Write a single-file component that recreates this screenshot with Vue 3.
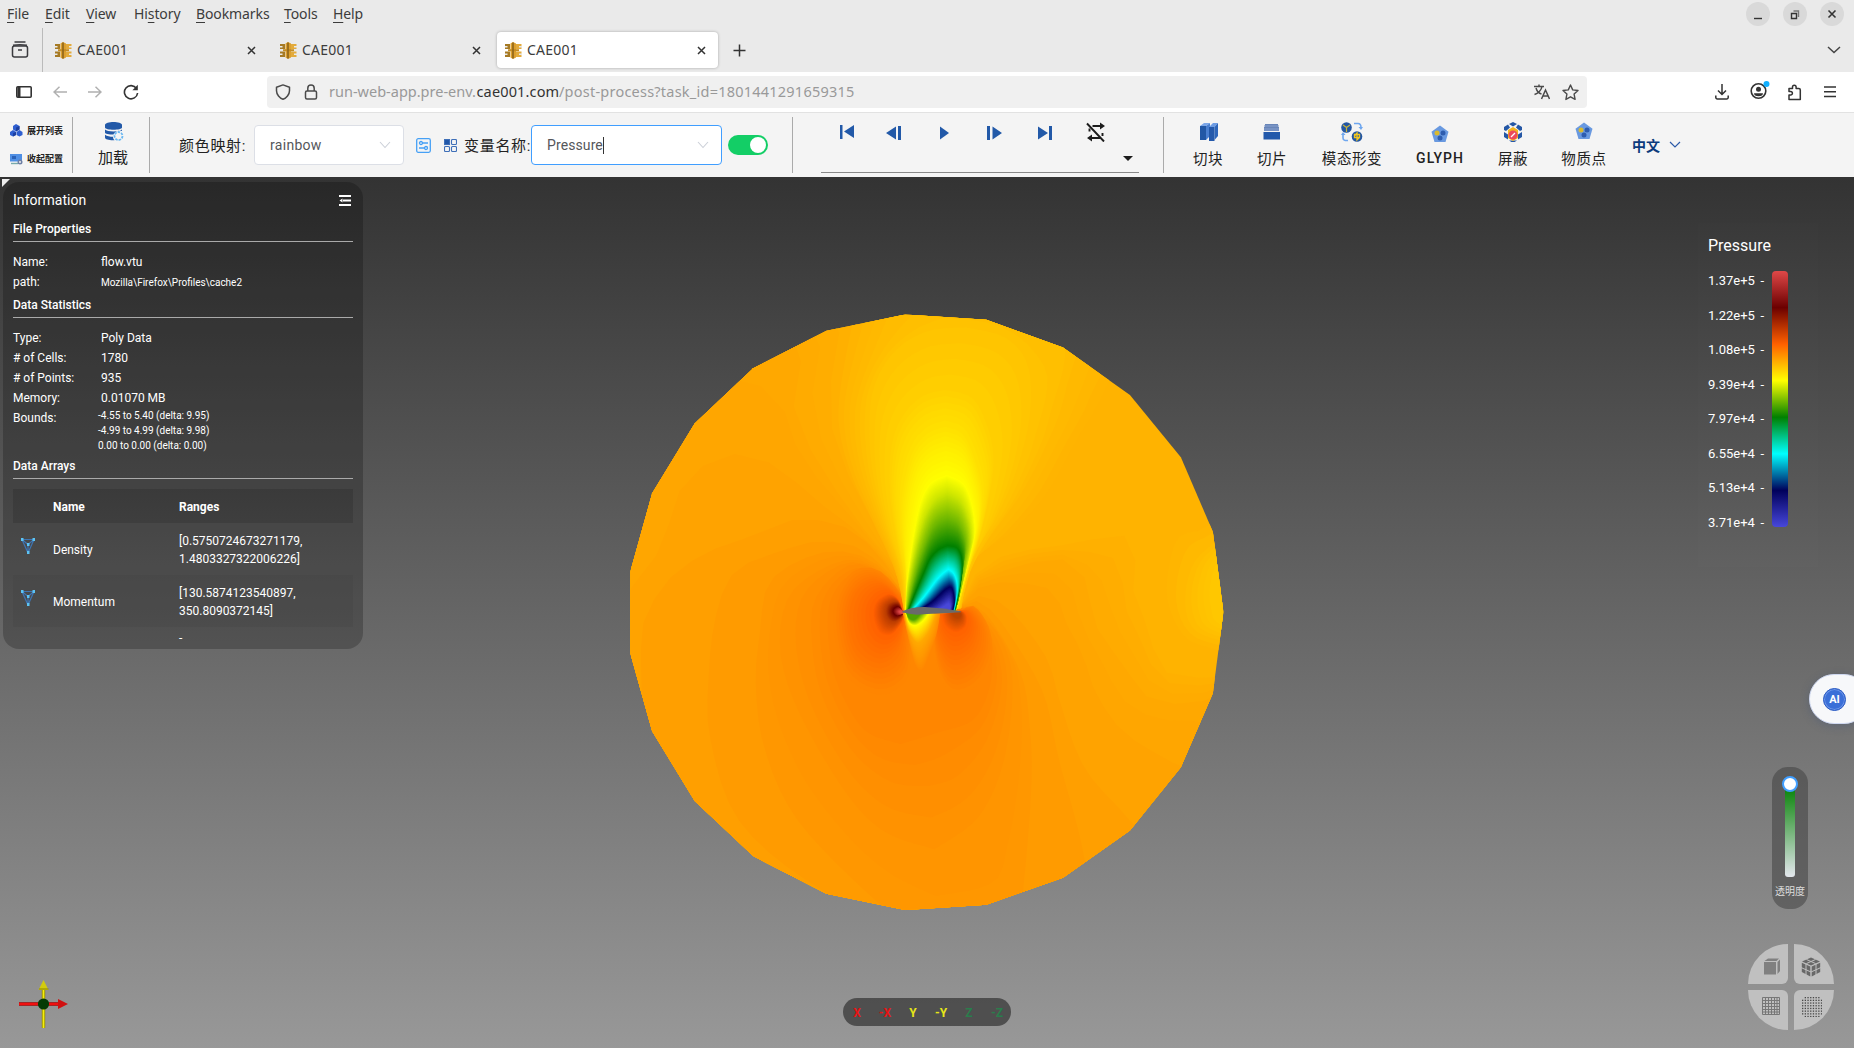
<script setup>
const menus = [
  { k: 'F', t: 'ile', x: 38 }, { k: 'E', t: 'dit', x: 41 }, { k: 'V', t: 'iew', x: 48 },
  { p: 'Hi', k: 's', t: 'tory', x: 62 }, { k: 'B', t: 'ookmarks', x: 88 },
  { k: 'T', t: 'ools', x: 49 }, { k: 'H', t: 'elp', x: 40 }
]
const tabs = [false, false, true]
const stats = [
  ['Type:', 'Poly Data'], ['# of Cells:', '1780'], ['# of Points:', '935'], ['Memory:', '0.01070 MB']
]
const arrays = [
  ['Density', '[0.5750724673271179,', '1.4803327322006226]'],
  ['Momentum', '[130.5874123540897,', '350.8090372145]']
]
const ticks = ['1.37e+5', '1.22e+5', '1.08e+5', '9.39e+4', '7.97e+4', '6.55e+4', '5.13e+4', '3.71e+4']
const axes = [['X', 'r'], ['-X', 'r'], ['Y', 'y'], ['-Y', 'y'], ['Z', 'g'], ['-Z', 'g']]
const dots = Array.from({ length: 64 }, (_, i) => [i % 8, Math.floor(i / 8)])
  .filter(([a, b]) => Math.hypot(a - 3.5, b - 3.5) < 4.6)

// Resample a polyline to n points, evenly spaced along its length
function resample(pts, n) {
  const len = [0]
  for (let i = 1; i < pts.length; i++) {
    len.push(len[i - 1] + Math.hypot(pts[i][0] - pts[i - 1][0], pts[i][1] - pts[i - 1][1]))
  }
  const out = []
  let j = 1
  for (let i = 0; i < n; i++) {
    const d = (len[len.length - 1] * i) / (n - 1)
    while (j < pts.length - 1 && len[j] < d) j++
    const f = (d - len[j - 1]) / (len[j] - len[j - 1] || 1)
    out.push([0, 1].map(c => pts[j - 1][c] + (pts[j][c] - pts[j - 1][c]) * f))
  }
  return out
}
// Catmull-Rom rounding of a polyline
function smooth(p) {
  const out = []
  for (let i = 0; i < p.length - 1; i++) {
    const a = p[Math.max(0, i - 1)], b = p[i], c = p[i + 1], d = p[Math.min(p.length - 1, i + 2)]
    for (let s = 0; s < 6; s++) {
      const t = s / 6
      out.push([0, 1].map(k => 0.5 * (2 * b[k] + (c[k] - a[k]) * t + (2 * a[k] - 5 * b[k] + 4 * c[k] - d[k]) * t * t + (3 * b[k] - a[k] - 3 * c[k] + d[k]) * t * t * t)))
    }
  }
  out.push(p[p.length - 1])
  return out
}
const parse = s => s.trim().split(/\s+/).map(v => v.split(',').map(Number))
const toView = ([x, y]) => [617.8 + 0.792 * x, 318.5 + 0.8167 * y]

// keys: [rgb, segment, segment...]; returns filled contours from the first key to the last
function bands(keys, map) {
  const ks = keys.map(([c, ...segs]) => ({
    c, p: segs.flatMap(s => resample(smooth(map ? parse(s).map(toView) : parse(s)), 34))
  }))
  const out = []
  for (let i = 0; i < ks.length; i++) {
    const a = ks[i], b = ks[i + 1]
    const diff = b ? Math.max(...a.c.map((v, k) => Math.abs(v - b.c[k]))) : 0
    const n = b ? Math.max(1, Math.min(26, Math.round(diff / 3))) : 1
    for (let s = 0; s < n; s++) {
      const f = s / n
      const mix = (u, v) => u + (v - u) * f
      out.push({
        fill: `rgb(${a.c.map((v, k) => Math.round(b ? mix(v, b.c[k]) : v)).join(',')})`,
        d: a.p.map((q, m) => q.map((v, k) => (b ? mix(v, b.p[m][k]) : v).toFixed(1)).join(',')).join(' ')
      })
    }
  }
  return out
}
const o = g => [255, g, 0]
const low = bands([
  [o(176), '862,765 880,710 960,650 1100,625 1250,602 1272,660 1265,730 1310,850 1330,930 1456,955 1600,980 1500,1600 800,1700', '800,1700 -100,1700 -100,300 300,-100 600,20 575,280 600,420 650,540 700,680 722,785'],
  [o(168), '862,768 890,720 950,690 1100,660 1170,740 1165,800 1270,960 1285,990 1370,1015 1450,1005 1560,1000 1450,1600 800,1680', '800,1680 -80,1680 -80,350 300,0 475,120 455,250 490,370 560,490 630,590 705,690 722,785'],
  [o(163), '862,770 900,730 980,715 1085,740 1095,790 1150,900 1165,960 1240,1080 1380,1170 1450,1220 1300,1600 800,1660', '800,1660 -20,1600 0,900 140,640 190,490 260,420 325,402 415,430 520,520 620,600 705,700 722,785'],
  [o(159), '862,772 900,750 970,780 1060,900 1090,1000 1150,1170 1259,1300 1320,1400 1200,1600 800,1640', '800,1640 400,1600 150,1300 97,890 140,740 240,650 370,600 470,562 600,590 705,710 722,785'],
  [o(155), '862,774 890,760 950,810 1050,980 1090,1150 1150,1390 1150,1560 800,1620', '800,1620 510,1460 330,1300 262,1100 258,950 275,800 320,690 430,640 520,616 620,635 707,720 722,785'],
  [o(151), '862,776 885,770 930,810 1000,940 1020,1060 1025,1210 1005,1470 980,1600 800,1600', '800,1600 660,1500 470,1300 390,1120 370,960 380,840 400,720 480,660 560,640 640,660 708,725 722,785'],
  [o(146), '860,778 885,780 950,850 980,960 960,1150 900,1290 795,1370', '795,1370 680,1330 590,1240 480,1050 430,900 440,770 500,700 610,660 712,730 722,785'],
  [o(140), '858,780 880,785 930,850 955,960 920,1100 850,1190 780,1215', '780,1215 690,1205 600,1130 530,1000 505,880 510,760 580,680 640,680 712,740 722,785'],
  [o(134), '858,780 880,790 920,850 930,950 890,1050 800,1085 715,1112', '715,1112 630,1080 570,980 545,880 545,770 590,700 650,690 713,745 722,785']
])
const lobes = [
  ...bands([
    [o(133), '722,790 715,745 660,685 600,690 560,760 558,850 590,950 665,992 725,960 738,900 728,800'],
    [o(115), '722,790 712,752 660,712 612,735 592,800 610,880 665,915 710,880 724,800'],
    [o(96), '720,790 708,758 684,745 656,765 650,800 664,838 690,845 712,822 721,800'],
    [[185, 60, 0], '719,790 710,768 700,764 684,772 680,792 688,808 700,812 713,804 719,795'],
    [[107, 0, 0], '719,790 711,778 705,776 698,781 696,788 700,795 705,798 713,796 719,793'],
    [[224, 72, 72], '723,789 718,786 713,786 711,788 713,791 718,792 721,791']
  ]),
  ...bands([
    [o(134), '795,795 792,850 800,920 820,970 850,992 900,965 930,900 925,830 890,775 858,785'],
    [o(114), '803,795 803,850 825,898 855,905 888,875 898,825 880,787 858,786'],
    [o(96), '812,795 820,822 843,838 866,828 872,805 866,791 855,786'],
    [[184, 68, 0], '836,793 842,800 850,803 856,800 857,793 852,788']
  ]),
  ...bands([
    [o(138), '720,792 732,850 748,915 765,930 785,885 800,840 808,794'],
    [o(170), '723,792 733,835 755,865 780,840 799,794'],
    [[255, 255, 0], '727,790 735,815 750,822 768,810 782,792'],
    [[80, 165, 0], '728,789 735,804 748,807 764,790']
  ])
]
const high = bands([
  [o(180), '722,785 702,690 650,570 600,460 570,350 570,250 600,80 620,0', '620,0 1260,0 1200,240 1130,370 1060,500 970,600 890,660 858,780'],
  [o(188), '723,785 707,690 660,560 620,440 605,330 620,230 690,50 700,20', '700,20 1120,20 1105,250 1060,380 1000,500 930,600 880,680 858,780'],
  [o(197), '724,785 714,690 680,580 650,460 640,350 650,240 700,150 780,100 870,92', '870,92 960,115 1015,180 1022,300 990,440 940,560 895,640 855,780'],
  [o(209), '725,785 721,700 702,600 688,480 695,370 725,300 770,258 820,245', '820,245 885,265 922,340 935,420 922,520 898,620 873,690 852,780'],
  [o(226), '726,785 727,700 717,600 718,500 742,400 778,352 820,335', '820,335 863,355 895,430 908,500 901,590 882,660 850,780'],
  [[255, 255, 0], '727,782 729,727 737,661 745,604 760,523 784,474 824,453', '824,453 863,474 883,523 891,588 883,633 871,678 855,743 845,784']
])
const plume = bands([
  [[255, 255, 0], '137,568 140,500 150,420 160,350 180,250 210,190 260,165', '260,165 310,190 335,250 345,330 335,385 320,440 300,520 287,570'],
  [[205, 230, 0], '138,569 144,500 157,427 173,355 195,285 225,237 262,217', '262,217 302,240 326,295 334,355 326,408 310,480 287,570'],
  [[115, 186, 0], '141,570 155,505 173,435 192,378 215,325 237,300 262,290', '262,290 293,306 313,347 317,385 311,430 297,530 286,571'],
  [[0, 128, 0], '145,572 165,520 190,460 210,415 235,388 262,376', '262,376 290,382 304,410 306,450 300,500 289,550 284,572'],
  [[0, 255, 255], '160,566 185,538 205,512 230,478 250,458 265,447', '265,447 279,457 289,480 291,510 286,550 281,572'],
  [[0, 0, 96], '190,562 215,545 240,522 255,508 268,500', '268,500 276,504 281,522 283,545 278,572'],
  [[72, 72, 216], '232,568 248,560 259,553 266,549', '266,549 269,553 271,560 269,570']
], true)
const edge = bands([
  [o(181), '1600,450 1440,580 1380,600 1355,660 1348,760 1390,850 1460,880 1600,920'],
  [o(188), '1600,500 1470,610 1410,670 1390,760 1410,830 1480,860 1600,880'],
  [o(199), '1600,560 1480,650 1450,720 1452,780 1475,820 1600,850']
])
const contours = [...low, ...edge, ...lobes, ...high, ...plume]
const rim = '725,60 918,73 1100,141 1259,257 1380,410 1456,592 1481,789 1456,988 1380,1169 1259,1324 1100,1440 918,1506 725,1519 538,1479 364,1387 225,1252 124,1081 72,890 72,690 124,498 225,327 364,192 538,100'
</script>

<template>
  <div class="window">
    <header class="chrome">
      <div class="menubar">
        <span v-for="m in menus" :key="m.k + m.t" class="menu" :style="{ width: m.x + 'px' }">{{ m.p }}<u>{{ m.k }}</u>{{ m.t }}</span>
        <div class="winbtns">
          <i><svg width="24" height="24"><path d="M8 16.500h8" /></svg></i>
          <i><svg width="24" height="24"><path d="M8.500 11.500h5v5h-5z" /><path d="M10.500 9h5v6" opacity=".6" /></svg></i>
          <i><svg width="24" height="24"><path d="M8.500 8.500l7 7M15.500 8.500l-7 7" stroke-width="1.600" /></svg></i>
        </div>
      </div>
      <div class="tabbar">
        <div class="tabview">
          <svg width="18" height="18" fill="none" stroke="#3b3b3f" stroke-width="1.500"><path d="M3.500 1h11" /><path d="M2 4.200q7-1 14 0" /><rect x="1.500" y="5" width="15" height="11" rx="2" /><path d="M7 9h4" /></svg>
        </div>
        <div v-for="(on, i) in tabs" :key="i" class="tab" :class="{ on }">
          <svg class="fav" width="17" height="17" viewBox="0 0 17 17"><path d="M0 2h5v5H0zM0 9.500h5V15H0z" fill="#a67a24" /><path d="M11 2h5.500v5H11zM11 9.500h5.500V15H11z" fill="#e3ab3c" /><path d="M5.500 1.500L8 0l3 1.500v14L8 17l-2.500-1.500z" fill="#dca030" /><path d="M0 4h2.500v1.500H0zM14 4h3v1.500h-3zM0 11.500h2.500V13H0zM14 11.500h3V13h-3z" fill="#eaeaea" /><path d="M3 7.200h11v2H3z" fill="#c58d24" /><path d="M8 .5v16" stroke="#8e6419" stroke-width="1.600" /></svg>
          <span>CAE001</span>
          <svg class="x" width="9" height="9"><path d="M1 1l7 7M8 1l-7 7" stroke="#333" stroke-width="1.500" /></svg>
        </div>
        <svg class="plus" width="13" height="13"><path d="M6.500 .5v12M.5 6.500h12" stroke="#333" stroke-width="1.500" /></svg>
        <svg class="alltabs" width="14" height="8" fill="none"><path d="M1 1l6 5.500L13 1" stroke="#444" stroke-width="1.500" /></svg>
      </div>
      <div class="navbar">
        <div class="navbtns">
          <svg width="16" height="14" fill="none" stroke="#333" stroke-width="1.600"><rect x=".8" y="1.800" width="14.400" height="10.400" rx="1" /><path d="M3 2v10" stroke-width="3" /></svg>
          <svg width="14" height="12" fill="none" stroke="#b0b0b0" stroke-width="1.500"><path d="M14 6H1M6.500 .7L1 6l5.500 5.300" /></svg>
          <svg width="14" height="12" fill="none" stroke="#b0b0b0" stroke-width="1.500"><path d="M0 6h13M7.500 .7L13 6l-5.500 5.300" /></svg>
          <svg width="16" height="16" fill="none" stroke="#333" stroke-width="1.600"><path d="M13.500 4.500A6.600 6.600 0 1 0 14.600 9" /><path d="M14.800 .8v5.400H9.400z" fill="#333" stroke="none" /></svg>
        </div>
        <div class="url">
          <svg width="16" height="16" fill="none" stroke="#4a4a4a" stroke-width="1.500"><path d="M8 .9L1.500 3.200v3.600c0 3.600 3.200 7.400 6.500 8.400 3.300-1 6.500-4.800 6.500-8.400V3.200z" stroke-linejoin="round" /></svg>
          <svg width="14" height="16" fill="none" stroke="#4a4a4a" stroke-width="1.500"><rect x="1.500" y="7" width="11" height="8" rx="1.500" /><path d="M3.800 7V4.200a3.200 3.200 0 0 1 6.400 0V7" /></svg>
          <p><span class="u1">run-web-app.pre-env.</span><b>cae001.com</b><span class="u3">/post-process?task_id=1801441291659315</span></p>
          <svg class="translate" width="16" height="16" fill="none" stroke="#4a4a4a" stroke-width="1.500"><path d="M0 2.500h10M5 .5v2M8 2.500C7.500 6 4 9.500.5 10.500M2 4c1 3.500 3.500 5.500 5.500 6" /><path d="M7.500 15l4-9 4 9M9 12h5" /></svg>
          <svg width="17" height="17" viewBox="0 0 17 17" fill="none" stroke="#4a4a4a" stroke-width="1.400" stroke-linejoin="round"><path d="M8.500 1l2.200 4.900 5.300.6-3.900 3.600 1 5.300-4.600-2.600-4.600 2.600 1-5.300L1 6.500l5.300-.6z" /></svg>
        </div>
        <div class="navright">
          <svg width="14" height="16" fill="none" stroke="#333" stroke-width="1.500"><path d="M7 0v10M3 6.500l4 4 4-4M.8 11.500v2a1.500 1.500 0 0 0 1.500 1.500h9.400a1.500 1.500 0 0 0 1.500-1.500v-2" /></svg>
          <svg width="20" height="20" viewBox="0 0 20 20"><circle cx="8.500" cy="11" r="7.300" fill="none" stroke="#333" stroke-width="1.600" /><circle cx="8.500" cy="9.200" r="2.500" fill="#333" /><path d="M4 13.200h9q0 3-4.500 3t-4.500-3" fill="#333" /><circle cx="16.500" cy="4" r="3" fill="#12b0ff" /></svg>
          <svg width="15" height="17" fill="none" stroke="#333" stroke-width="1.500" stroke-linejoin="round"><path d="M2 4.500h3.500V3a1.800 1.800 0 0 1 3.600 0v1.500h2.700q1.500 0 1.500 1.500v9.500H2V11h1.600a1.800 1.800 0 0 0 0-3.600H2z" /></svg>
          <svg width="12" height="12" stroke="#333" stroke-width="1.400"><path d="M0 1h12M0 5.800h12M0 10.500h12" /></svg>
        </div>
      </div>
    </header>

    <section class="toolbar">
      <div class="toggles">
        <div><svg width="13" height="13"><path d="M6 0l3.500 2v3.500L6 7.500 3 5.500V2zM3 6l3 2v3l-3 1.600L0 11V8zM9.500 6l3 2v3l-3 1.600-3-1.600V8z" fill="#2f5fd0" /><path d="M6 3.500l3.500-1.500v3.500L6 7.500zM3 9.300L6 8v3l-3 1.600z" fill="#1d3f9e" /></svg>展开列表</div>
        <div><svg width="13" height="12"><path d="M0 1h12v7.500H0z" fill="#4f8fe4" /><path d="M2 3h4v3H2z" fill="#2a62b8" /><path d="M1 10.500h7" stroke="#7aa" stroke-width="1.400" /><circle cx="10" cy="9" r="2.500" fill="#6d7fa5" /><circle cx="10" cy="9" r="1" fill="#eee" /></svg>收起配置</div>
      </div>
      <div class="load">
        <svg width="19" height="19"><path d="M0 3c0-4 17-4 17 0v2.500c0 3-17 3-17 0z" fill="#2259a8" /><path d="M0 7.500c2 2.500 15 2.500 17 0V9c-5-1-8 2-8.500 3.500C4 12.500 0 12 0 10.500zM0 12.800c2 1.600 5 2 8 2 0 1.500.5 2.500 1.500 3.400C5 18.500 0 17.600 0 15.500z" fill="#2259a8" /><circle cx="13.500" cy="14" r="4" fill="none" stroke="#6bb8f2" stroke-width="1.800" stroke-dasharray="2.500 1" /></svg>
        <span>加载</span>
      </div>
      <div class="mapping">
        <label class="lb1">颜色映射:</label>
        <div class="select s1">rainbow<svg width="12" height="8" fill="none" stroke="#ccd0d8" stroke-width="1.100"><path d="M1 1l5 5.500L11 1" /></svg></div>
        <svg class="cfg" width="15" height="15" fill="none" stroke="#46a0f5" stroke-width="1.300"><rect x=".7" y=".7" width="13.600" height="13.600" rx="1.500" /><circle cx="5" cy="5" r="1.500" /><path d="M6.500 5H12M3 10h5" /><circle cx="10" cy="10" r="1.500" /></svg>
        <svg class="grid4" width="13" height="13" fill="none" stroke="#3e6fb8" stroke-width="1.100"><rect x=".5" y=".5" width="5" height="5" fill="#2057a8" /><rect x="7.500" y=".5" width="5" height="5" rx="1" /><rect x=".5" y="7.500" width="5" height="5" rx="1" /><rect x="7.500" y="7.500" width="5" height="5" rx="1" /></svg>
        <label class="lb2">变量名称:</label>
        <div class="select s2">Pressure<i class="caret"></i><svg width="12" height="8" fill="none" stroke="#ccd0d8" stroke-width="1.100"><path d="M1 1l5 5.500L11 1" /></svg></div>
        <div class="switch"><i></i></div>
      </div>
      <div class="player">
        <div class="keys">
          <svg width="14" height="14"><path d="M0 0h2.500v14H0zM14 0v13L4 6.500z" /></svg>
          <svg width="15" height="14"><path d="M12 0h3v14h-3zM10 .5v13L0 7z" /></svg>
          <svg width="9" height="14"><path d="M0 .5v13L9 7z" /></svg>
          <svg width="15" height="14"><path d="M0 0h3v14H0zM5.500 .5v13L15 7z" /></svg>
          <svg width="14" height="14"><path d="M11 0h3v14h-3zM0 .5v13L10 7z" /></svg>
          <svg class="loop" width="19" height="20" fill="none" stroke="#1c1c1c" stroke-width="1.900"><path d="M1 1.500l17 18" /><path d="M6.500 4H15M3.500 6.500v3M16.500 11v3M4 16h10" /><path d="M14 .5l5 3.500-5 3.500zM6 12.500l-5 3.500 5 3.500z" fill="#1c1c1c" stroke="none" /></svg>
        </div>
        <svg class="tri" width="10" height="5"><path d="M0 0h10L5 5z" fill="#1c1c1c" /></svg>
      </div>
      <div class="tools">
        <div class="tool" style="width: 64px">
          <svg width="20" height="20"><path d="M1 4h6v14H1z" fill="#2257a5" /><path d="M1 4l4-3h6L7 4z" fill="#7ba6e8" /><path d="M7 4l4-3v13l-4 4z" fill="#4a7fd0" /><path d="M10 5h5.500v14H10z" fill="#2459ab" /><path d="M10 5l4-4h5l-3.500 4z" fill="#6d9ce4" /><path d="M15.500 5L19 1v13l-3.500 4z" fill="#2e66ba" /></svg><span>切块</span>
        </div>
        <div class="tool" style="width: 64px">
          <svg width="18" height="20"><path d="M1.500 3h14v2h-14zM1 6h15v3H1z" fill="#7893c4" /><path d="M.5 10h16.500v7.500H.5z" fill="#2259ab" /><path d="M2 2.500h13M1 5.500h15" stroke="#4468a8" stroke-width=".8" /></svg><span>切片</span>
        </div>
        <div class="tool" style="width: 96px">
          <svg width="22" height="20"><circle cx="5.500" cy="5.500" r="5.300" fill="#2356a2" /><path d="M5.500 5.500V10M5.500 5.500L2 3M5.500 5.500L9 3" stroke="#c8b43a" stroke-width="1.200" /><circle cx="16" cy="14.500" r="5.300" fill="#2356a2" /><path d="M13.500 14l2.500-3v7l2.500-2.500v-3h-5v3h5" fill="none" stroke="#f0c51e" stroke-width="1.300" /><path d="M13 1.500h4q3 0 3 4M2 12v4q0 3 5 2.500" fill="none" stroke="#6fa7ef" stroke-width="1.600" /><path d="M17.500 5h4.500l-2 3zM0 13l2-3 2.500 3z" fill="#6fa7ef" /></svg><span>模态形变</span>
        </div>
        <div class="tool glyph" style="width: 80px">
          <svg width="18" height="18"><path d="M9 .5l8.500 6.300L14.500 17h-11L.5 6.800z" fill="#6999e0" /><circle cx="6" cy="8" r="2.500" fill="#d9b92e" /><circle cx="12" cy="8" r="2.500" fill="#2d5cae" /><circle cx="9" cy="13" r="2.500" fill="#2d5cae" /></svg><span>GLYPH</span>
        </div>
        <div class="tool" style="width: 66px">
          <svg width="20" height="21"><path d="M10 0l4 2-4 2.500L6 2zM1 5l4-2.500 2 3L3 9l-2-1zM19 5l-4-2.500-2 3L17 9l2-1zM1 10l4 2.500v5L1 15zM19 10l-4 2.500v5l4-2.500zM10 21l-4-2.500h8z" fill="#2457a5" /><path d="M10 5l5 3v8l-5 3-5-3V8z" fill="#f5b51e" /><circle cx="10" cy="13" r="4.500" fill="#ed4a5c" /><path d="M8 15l4-4" stroke="#fff" stroke-width="1.200" /></svg><span>屏蔽</span>
        </div>
        <div class="tool" style="width: 76px">
          <svg width="18" height="19"><path d="M9 .5l8.500 6.300L14.500 17h-11L.5 6.800z" fill="#6999e0" /><circle cx="6" cy="8" r="2.500" fill="#d9b92e" /><circle cx="12" cy="8" r="2.500" fill="#2d5cae" /><circle cx="9" cy="13" r="2.500" fill="#2d5cae" /></svg><span>物质点</span>
        </div>
        <div class="lang">中文<svg width="12" height="8" fill="none" stroke="#2c5aa8" stroke-width="1.200"><path d="M1 1l5 5L11 1" /></svg></div>
      </div>
    </section>

    <main class="scene">
      <svg class="field" viewBox="0 0 1568 1568" preserveAspectRatio="none">
        <defs><clipPath id="rim"><polygon :points="rim" /></clipPath></defs>
        <g clip-path="url(#rim)">
          <rect width="1568" height="1568" fill="#ffb300" />
          <polygon v-for="(c, i) in contours" :key="i" :points="c.d" :fill="c.fill" />
          <path transform="translate(617.8 318.5) scale(.792 .8167)" d="M127 574Q155 560 195 561Q250 564 302 574V577Q230 581 170 584Q145 583 127 577z" fill="#6a6a6a" />
        </g>
      </svg>
      <div class="corner"></div>

      <aside class="info">
        <h2>Information<svg width="12" height="11" stroke="#fff" stroke-width="2"><path d="M0 1h12M4 5.500h8M0 10h12" /><path d="M3.500 3.500v4L.5 5.500z" fill="#fff" stroke="none" /></svg></h2>
        <h3>File Properties</h3>
        <dl>
          <div><dt>Name:</dt><dd>flow.vtu</dd></div>
          <div><dt>path:</dt><dd class="sm path">Mozilla\Firefox\Profiles\cache2</dd></div>
        </dl>
        <h3 class="h3b">Data Statistics</h3>
        <dl>
          <div v-for="s in stats" :key="s[0]"><dt>{{ s[0] }}</dt><dd>{{ s[1] }}</dd></div>
          <div class="bounds"><dt>Bounds:</dt><dd class="sm">-4.55 to 5.40 (delta: 9.95)<br>-4.99 to 4.99 (delta: 9.98)<br>0.00 to 0.00 (delta: 0.00)</dd></div>
        </dl>
        <h3 class="h3c">Data Arrays</h3>
        <div class="table">
          <div class="row head"><span></span><b>Name</b><b>Ranges</b></div>
          <div v-for="a in arrays" :key="a[0]" class="row">
            <svg width="14" height="17"><path d="M1 1.500h12L7 15zM1 1.500l6 5 6-5M7 6v9" fill="none" stroke="#3f74b0" stroke-width="1.200" /><path d="M0 0h2.500v3H0zM11.500 0H14v3h-2.500zM6 5h2.500v3H6zM6 13h2.500v3H6z" fill="#5cc4f5" /></svg>
            <span>{{ a[0] }}</span><span>{{ a[1] }}<br>{{ a[2] }}</span>
          </div>
          <div class="row last"><span></span><span></span><span>-</span></div>
        </div>
      </aside>

      <div class="legend">
        <h4>Pressure</h4>
        <div class="scale">
          <ul><li v-for="t in ticks" :key="t"><span>{{ t }}</span><span>-</span></li></ul>
          <div class="ramp"></div>
        </div>
      </div>

      <div class="ai"><span>AI</span></div>

      <div class="opacity"><div class="track"><i></i></div><span>透明度</span></div>

      <div class="modes">
        <div><svg width="18" height="18"><path d="M1 4h12v12.500H1z" fill="#808080" /><path d="M1.500 3L5 .5h11L13.500 3zM14.500 4L17 1.500V13l-2.500 3z" fill="#808080" /></svg></div>
        <div><svg width="20" height="20"><path d="M10 .5l9 4-9 4-9-4zM.8 5.800L9.300 9.500v10L.8 15zM19.200 5.800L10.700 9.500v10l8.500-4.500z" fill="#686868" /><path d="M0 10.500L10 15l10-4.500M5 7v11M15 7v11M5.500 2.500l9 4M14.500 2.500l-9 4" stroke="#c0c0c0" fill="none" /></svg></div>
        <div><svg width="18" height="18" fill="none" stroke="#777" stroke-width="1"><path d="M.5 .5h17v17H.5zM3.500 0v18M6.500 0v18M9.500 0v18M12.500 0v18M15 0v18M0 3.500h18M0 6.500h18M0 9.500h18M0 12.500h18M0 15h18" /></svg></div>
        <div><svg width="20" height="20" fill="#484848"><rect v-for="(d, i) in dots" :key="i" :x="d[0] * 2.700" :y="d[1] * 2.700" width="1.300" height="1.300" /></svg></div>
      </div>

      <svg class="gizmo" width="60" height="60"><path d="M30.500 14v41" stroke="#8a8400" stroke-width="3.400" /><path d="M30.500 14v41" stroke="#f5ee10" stroke-width="1.800" /><path d="M6 31h42" stroke="#a00" stroke-width="3.400" /><path d="M6 31h42" stroke="#f01010" stroke-width="1.800" /><path d="M30.500 7l5 10h-10z" fill="#d2cb0e" /><path d="M26 16h9.500" stroke="#8a8400" /><path d="M55 31l-10-5v10z" fill="#d01010" /><circle cx="30.500" cy="31" r="5.600" fill="#043a04" /></svg>

      <div class="views"><span v-for="a in axes" :key="a[0]" :class="a[1]">{{ a[0] }}</span></div>
    </main>
  </div>
</template>

<style>
body { margin: 0; overflow: hidden; }
</style>

<style scoped>
* { box-sizing: border-box; }
svg { display: block; flex: none; }
i { font-style: normal; }
.window { width: 1854px; height: 1048px; display: flex; flex-direction: column; font-family: Roboto, "Noto Sans CJK SC", sans-serif; }
.chrome { font-family: "Noto Sans", "Open Sans", sans-serif; color: #3c3c3c; }
.menubar { height: 28px; background: #eaeaea; display: flex; align-items: center; padding-left: 7px; font-size: 14px; letter-spacing: -.1px; }
.menu u { text-underline-offset: 3px; text-decoration-thickness: 1px; }
.menu { white-space: nowrap; padding-bottom: 2px; }
.winbtns { margin-left: auto; display: flex; gap: 13px; margin-right: 10px; }
.winbtns i { width: 24px; height: 24px; border-radius: 50%; background: #d9d9d9; }
.winbtns svg { fill: none; stroke: #333; stroke-width: 1.400; }
.tabbar { height: 44px; background: #eaeaea; display: flex; align-items: center; }
.tabview { width: 43px; height: 44px; border-right: 1px solid #bbb; display: flex; align-items: center; padding-left: 11px; }
.tab { width: 221px; height: 36px; margin-left: 4px; padding: 0 12px 0 8px; display: flex; align-items: center; font-size: 14px; border-radius: 4px; }
.tab span { padding-bottom: 2px; letter-spacing: .25px; }
.tab.on { background: #fff; box-shadow: 0 0 3px rgba(0, 0, 0, .3); }
.fav { margin-right: 5px; }
.x { margin-left: auto; }
.plus { margin-left: 15px; }
.alltabs { margin-left: auto; margin-right: 13px; }
.navbar { height: 41px; background: #fff; border-bottom: 1px solid #e2e2e2; display: flex; align-items: center; }
.navbtns { width: 267px; display: flex; align-items: center; gap: 21px; padding-left: 16px; }
.url { width: 1320px; height: 32px; border-radius: 4px; background: #f0f0f0; display: flex; align-items: center; padding: 0 8px; font-size: 14.500px; }
.url p { margin: 0; padding: 0 0 2px 11px; color: #999; white-space: nowrap; flex: 1; display: flex; }
.url svg:nth-child(2) { margin-left: 13px; }
.url b { font-weight: 400; color: #333; width: 82.500px; letter-spacing: .15px; }
.u1 { width: 147.500px; }
.u3 { letter-spacing: .23px; }
.url .translate { margin-right: 12px; }
.navright { display: flex; align-items: center; padding-left: 128px; }
.navright svg:nth-child(2) { margin: -4px 0 0 21px; }
.navright svg:nth-child(3) { margin-left: 17px; }
.navright svg:nth-child(4) { margin-left: 22px; }

.toolbar { height: 64px; background: #f4f4f4; display: flex; padding-top: 4px; color: #222; }
.toggles { width: 73px; height: 56px; border-right: 1px solid #aaa; padding-left: 10px; display: flex; flex-direction: column; }
.toggles div { height: 28px; display: flex; align-items: center; gap: 4px; font-size: 9px; font-weight: 700; white-space: nowrap; padding-bottom: 1px; }
.load { width: 77px; height: 56px; border-right: 1px solid #aaa; display: flex; flex-direction: column; align-items: center; padding: 5px 0 0 7px; }
.load span { font-size: 15px; line-height: 20px; margin-top: 7px; margin-left: -3px; }
.mapping { width: 643px; height: 56px; border-right: 1px solid #aaa; display: flex; align-items: center; }
.mapping label { font-size: 15px; letter-spacing: .7px; white-space: nowrap; padding-bottom: 1px; }
.lb1 { width: 75px; margin-left: 29px; }
.select { height: 40px; border: 1px solid #dcdfe6; border-radius: 4px; background: #fff; display: flex; align-items: center; font-size: 14px; color: #55575b; padding: 0 12px 0 15px; letter-spacing: .3px; }
.select svg { margin-left: auto; }
.s1 { width: 150px; }
.cfg { margin-left: 12px; }
.grid4 { margin-left: 13px; }
.lb2 { width: 67px; margin-left: 7px; }
.s2 { width: 191px; border-color: #409eff; letter-spacing: .1px; }
.caret { width: 1px; height: 17px; background: #333; }
.switch { width: 40px; height: 20px; border-radius: 10px; background: #13ce66; margin-left: 6px; padding: 2px; display: flex; justify-content: flex-end; }
.switch i { width: 16px; height: 16px; border-radius: 50%; background: #fff; }
.player { width: 371px; height: 56px; border-right: 1px solid #aaa; padding-left: 28px; }
.keys { width: 318px; height: 56px; border-bottom: 1px solid #888; display: flex; align-items: flex-start; padding: 8px 0 0 19px; }
.keys svg { fill: #2259a8; }
.keys svg:nth-child(n + 2) { margin-top: 1px; }
.keys svg:nth-child(2) { margin-left: 32px; }
.keys svg:nth-child(3) { margin-left: 39px; }
.keys svg:nth-child(4) { margin-left: 38px; }
.keys svg:nth-child(5) { margin-left: 36px; }
.keys svg.loop { margin: -3px 0 0 34px; fill: none; }
.tri { margin: -17px 0 0 302px; position: relative; }
.tools { display: flex; padding-left: 12px; }
.tool { display: flex; flex-direction: column; align-items: center; padding: 5px 0 0; }
.tool svg { height: 20px; }
.tool:first-child svg { margin-left: 2px; }
.tool span { font-size: 14.500px; letter-spacing: .6px; line-height: 20px; margin-top: 8px; white-space: nowrap; }
.tool.glyph { padding-top: 8px; }
.tool.glyph span { font-size: 14px; font-weight: 500; margin-top: 3px; letter-spacing: 1px; }
.lang { display: flex; gap: 9px; align-items: center; height: 56px; font-size: 14px; font-weight: 700; color: #0c3b7c; margin-left: 10px; }

.scene { position: relative; flex: 1; background: linear-gradient(#333, #989898); overflow: hidden; }
.field { position: absolute; left: 600px; top: 113px; width: 660px; height: 640px; }
.corner { position: absolute; left: 2px; top: 2px; border-top: 8px solid #eee; border-right: 8px solid transparent; }
.info { position: absolute; left: 3px; top: 5px; width: 360px; height: 467px; border-radius: 16px; background: rgba(0, 0, 0, .22); overflow: hidden; color: #fff; padding: 0 10px; font-size: 12px; }
.info h2 { margin: 0; height: 36px; font-size: 14px; font-weight: 400; letter-spacing: .05px; display: flex; align-items: center; justify-content: space-between; padding-right: 2px; }
.info h3 { margin: 0; height: 24px; line-height: 22px; font-size: 12px; font-weight: 500; border-bottom: 1px solid #aaa; }
.info dl { margin: 0; padding-top: 10px; }
.info dl div { display: flex; height: 20px; line-height: 20px; }
.info dt { width: 88px; }
.info dd { margin: 0; }
.info .sm { font-size: 10px; }
.info .path { padding-top: 1px; }
.info .h3b { margin-top: 2px; }
.info dl .bounds { height: 48px; }
.bounds dt { width: 85px; }
.info dl .bounds dd { line-height: 15px; }
.info .h3c { margin-top: -1px; height: 24px; }
.table { margin-top: 10px; }
.table .row { display: grid; grid-template-columns: 40px 126px 1fr; height: 52px; align-items: center; line-height: 18px; padding-top: 2px; }
.table .head { height: 34px; background: rgba(0, 0, 0, .12); }
.table .row b { font-weight: 700; }
.table .row svg { margin: -8px 0 0 8px; }
.table .row:nth-child(3) { background: rgba(0, 0, 0, .04); }
.table .last { align-items: start; }

.legend { position: absolute; left: 1698px; top: 46px; width: 120px; height: 344px; background: rgba(255, 255, 255, .008); color: #fff; padding: 11px 10px; }
.legend h4 { margin: 0; font-weight: 400; font-size: 16px; line-height: 24px; }
.scale { display: flex; margin-top: 13px; height: 256px; }
.scale ul { list-style: none; margin: 0; padding: 0 8px 0 0; width: 64px; font-size: 13px; display: flex; flex-direction: column; justify-content: space-between; height: 262px; }
.scale li { display: flex; justify-content: space-between; line-height: 20px; white-space: nowrap; }
.ramp { width: 16px; border-radius: 4px; background: linear-gradient(#e04848, #6b0000, #ff6000, #ffff00, #008000, #00ffff, #00005b, #4747db); }

.ai { position: absolute; left: 1809px; top: 497px; width: 60px; height: 50px; border-radius: 25px; background: #f7f8fa; border: 1px solid #cfd8f0; box-shadow: 0 2px 8px rgba(60, 80, 120, .35); padding: 13px 0 0 13px; }
.ai span { display: block; width: 23px; height: 23px; border-radius: 50%; background: #3b6fd8; border: 1px solid #2c5cc4; box-shadow: inset 0 0 0 1px #6c95e8; color: #fff; font-weight: 700; font-size: 11px; line-height: 22px; text-align: center; }
.opacity { position: absolute; left: 1772px; top: 590px; width: 36px; height: 142px; border-radius: 16px; background: rgba(60, 60, 60, .5); display: flex; flex-direction: column; align-items: center; padding-top: 17px; color: #fff; font-size: 10px; }
.track { width: 10px; height: 93px; border-radius: 3px; background: linear-gradient(#008000, #e4e7ed); }
.track i { display: block; width: 16px; height: 16px; margin: -8px 0 0 -3px; border-radius: 50%; background: #fff; border: 2px solid #409eff; }
.opacity span { margin-top: 7px; white-space: nowrap; line-height: 15px; color: #ddd; }
.modes { position: absolute; left: 1748px; top: 767px; width: 86px; height: 86px; display: grid; grid-template-columns: 40px 40px; gap: 6px; }
.modes div { height: 40px; background: #c0c0c0; display: flex; align-items: center; justify-content: center; }
.modes div:nth-child(1) { border-radius: 40px 0 6px 0; padding: 5px 0 0 7px; }
.modes div:nth-child(2) { border-radius: 0 40px 0 6px; padding: 6px 6px 0 0; }
.modes div:nth-child(3) { border-radius: 0 6px 0 40px; padding: 0 0 9px 6px; }
.modes div:nth-child(4) { border-radius: 6px 0 40px 0; padding: 0 5px 7px 0; }
.gizmo { position: absolute; left: 13px; top: 796px; }
.views { position: absolute; left: 843px; top: 821px; width: 168px; height: 28px; border-radius: 14px; background: rgba(50, 50, 50, .7); display: flex; align-items: center; justify-content: space-around; font-size: 12px; font-weight: 700; padding-top: 1px; }
.views span { width: 28px; text-align: center; }
.r { color: #e61414; }
.y { color: #e6e619; }
.g { color: #2a7d4c; }
</style>
